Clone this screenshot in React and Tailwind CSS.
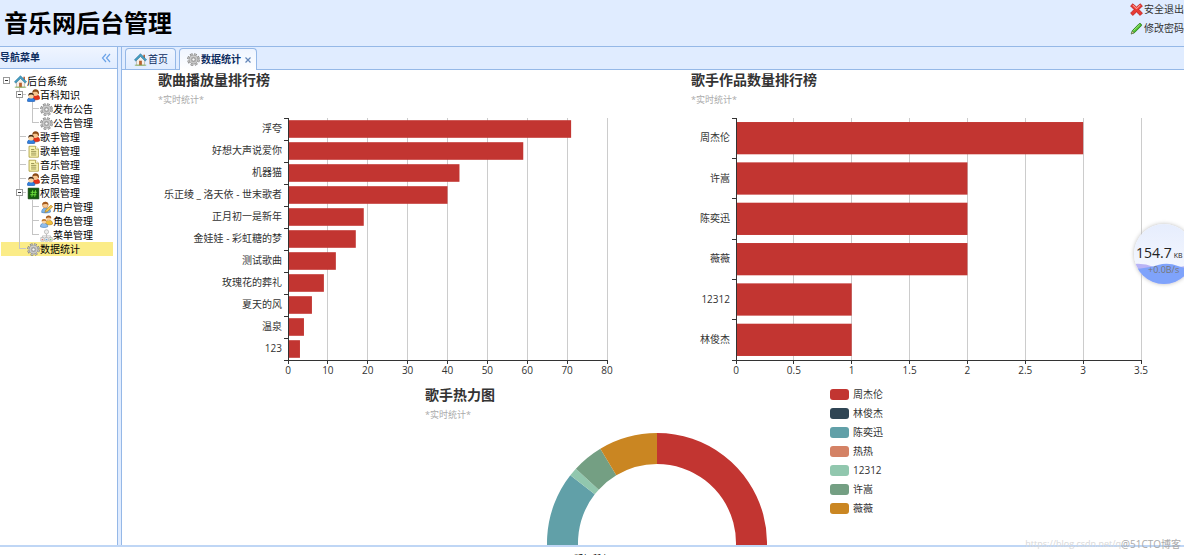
import React from "react";

const HomeIcon = () => (
  <svg viewBox="0 0 16 16" className="h-[13px] w-[13px] shrink-0" aria-hidden="true">
    <path d="M3 8v7h10V8L8 3z" fill="#f4f0ea" stroke="#a9a49c" strokeWidth=".8" />
    <path d="M11.5 2h2v4h-2z" fill="#b3623a" />
    <path d="M.6 8.4 8 1l7.4 7.4-1.6 1.4L8 4.2 2.2 9.8z" fill="#4aa3c7" stroke="#226f94" strokeWidth=".8" />
    <path d="M6.3 9.5h3.4V15H6.3z" fill="#b8612f" />
    <path d="M1 15h14" stroke="#7bab4c" strokeWidth="1" />
  </svg>
);

const GearIcon = () => (
  <svg viewBox="0 0 16 16" className="h-[13px] w-[13px] shrink-0" aria-hidden="true">
    <circle cx="8" cy="8" r="6.3" fill="none" stroke="#777" strokeWidth="3" strokeDasharray="3.1 1.85" />
    <circle cx="8" cy="8" r="6.2" fill="none" stroke="#c4c4c4" strokeWidth="1.700" strokeDasharray="2.3 2.57" strokeDashoffset="-.4" />
    <circle cx="8" cy="8" r="5.4" fill="#cfcfcf" stroke="#8c8c8c" strokeWidth=".7" />
    <circle cx="8" cy="8" r="3.5" fill="#b0b0b0" />
    <circle cx="8" cy="8" r="1.9" fill="#f7f7f7" stroke="#777" strokeWidth=".6" />
  </svg>
);

const UsersIcon = () => (
  <svg viewBox="0 0 16 16" className="h-[13px] w-[13px] shrink-0" aria-hidden="true">
    <path d="M6 11.500c0-3 2-4.500 5-4.500s4.700 1.500 4.700 5c-2 1.800-7 1.800-9.700 0z" fill="#e33219" stroke="#a51c0c" strokeWidth=".6" />
    <circle cx="10.300" cy="5" r="3.600" fill="#f7c48d" />
    <path d="M6.500 5C6.300 2 8 .4 10.500.4s4.500 1.500 4.300 4.800l-1 2c0-2.400-.8-3.400-2.400-3.800C9.500 3 8 3.400 6.500 5z" fill="#8a4a17" />
    <path d="M.3 15c0-3.200 1.800-4.400 4.700-4.400s4.800 1.400 4.800 4.400c-2.500.9-7 .9-9.500 0z" fill="#2f7fe0" stroke="#164d9c" strokeWidth=".6" />
    <circle cx="5" cy="8.500" r="3.200" fill="#fad3a0" />
    <path d="M1.600 8.500C1.500 6 2.800 4.700 5 4.700s3.700 1.300 3.500 3.800C7.500 7 5.900 6.900 4.900 6.900 3.600 6.900 2.500 7.500 1.600 8.500z" fill="#3d2614" />
  </svg>
);

const NoteIcon = () => (
  <svg viewBox="0 0 16 16" className="h-[13px] w-[13px] shrink-0" aria-hidden="true">
    <path d="M2.500 1.500h8l3.500 3.500v10H2.500z" fill="#fbf6b4" stroke="#a79a3c" />
    <path d="M10.500 1.500V5H14" fill="#fff" stroke="#a79a3c" strokeWidth=".9" />
    <path d="M5 5.500h4M5 7.800h6.500M5 10h6.500M5 12.300h6.500" stroke="#8f8847" strokeWidth="1.100" />
  </svg>
);

const GreenIcon = () => (
  <svg viewBox="0 0 16 16" className="h-[13px] w-[13px] shrink-0" aria-hidden="true">
    <path d="M1.500 1.500h13v13h-13z" fill="#145c0d" stroke="#0d3d08" />
    <path d="M7 4 6 12M10.500 4l-1 8M4.500 6.500h7.500M4 9.500h7.500" stroke="#6ddd3c" strokeWidth="1.200" />
  </svg>
);

const UserEditIcon = () => (
  <svg viewBox="0 0 16 16" className="h-[13px] w-[13px] shrink-0" aria-hidden="true">
    <path d="M2 14c0-4 2-5.500 5.500-5.500S13 10 13 13.500c-3 1.500-8 1.500-11 .5z" fill="#7fb4e8" stroke="#3c77b4" strokeWidth=".7" />
    <circle cx="6.500" cy="5" r="3.500" fill="#f7c893" stroke="#bd7537" strokeWidth=".6" />
    <path d="M2.800 5C2.500 2 4.500.8 6.700.8c2.500 0 4 1.700 3.600 4.200C9 3.300 5.500 3 2.800 5z" fill="#a45b20" />
    <path d="m6 14 1.200-3.200L13.500 5l2 2.200-6.300 5.800z" fill="#f2c34c" stroke="#a87414" strokeWidth=".7" />
  </svg>
);

const RoleIcon = () => (
  <svg viewBox="0 0 16 16" className="h-[13px] w-[13px] shrink-0" aria-hidden="true">
    <path d="M6.500 11c0-3 1.500-4.500 4.500-4.500s4.500 1.500 4.500 4.500c-2 1.500-6 1.500-9 0z" fill="#f0bd3b" stroke="#ac7b12" strokeWidth=".7" />
    <circle cx="10.500" cy="4" r="3" fill="#f7c893" />
    <path d="M7.200 4.200C7 1.800 8.500.6 10.600.6s3.500 1.500 3.300 3.700C12 2.700 9.500 2.700 7.200 4.200z" fill="#a45b20" />
    <path d="M.5 14.500c0-3 1.500-4.300 4.500-4.300s4.500 1.500 4.500 4.300c-2.500 1.200-6.500 1.200-9 0z" fill="#8fbdec" stroke="#3c77b4" strokeWidth=".7" />
    <circle cx="5" cy="8" r="2.700" fill="#f9d2a3" />
    <path d="M2 8C2 5.900 3.200 5 5 5s3.100 1 3 3C6.500 6.800 4 6.700 2 8z" fill="#c17a2f" />
  </svg>
);

const MenuTreeIcon = () => (
  <svg viewBox="0 0 16 16" className="h-[13px] w-[13px] shrink-0" aria-hidden="true">
    <path d="M8 6v5M3 11V8.500h10V11" fill="none" stroke="#b5b5b5" />
    <circle cx="8" cy="3.500" r="2.600" fill="#eee" stroke="#aaa" strokeWidth=".8" />
    <path d="M1 10.500h4v4.500H1zM6 10.500h4v4.500H6zM11 10.500h4v4.500h-4z" fill="#f4f4f4" stroke="#aaa" strokeWidth=".8" />
    <circle cx="3" cy="13" r="1" fill="#e07a6c" />
    <circle cx="8" cy="13" r="1" fill="#68a8e0" />
    <circle cx="13" cy="13" r="1" fill="#7cc46c" />
  </svg>
);

const CancelIcon = () => (
  <svg viewBox="0 0 16 16" className="h-[13px] w-[13px] shrink-0" aria-hidden="true">
    <path d="M3.500 1 8 5l4.500-4L15.300 3.600 11 8l4.300 4.500-2.800 2.800L8 11l-4.500 4.300L.7 12.500 5 8 .7 3.600z" fill="#e83a34" stroke="#b51713" strokeWidth=".9" strokeLinejoin="round" />
    <path d="M3.500 2.600 8 6.800l4.500-4.200" fill="none" stroke="#ff9c94" strokeWidth="1.300" />
  </svg>
);

const PencilIcon = () => (
  <svg viewBox="0 0 16 16" className="h-[13px] w-[13px] shrink-0" aria-hidden="true">
    <path d="M1.500 14.700 3 10.500 11.300 2c1.200-1 3.700 1 2.700 2.600L5.500 13.200z" fill="#4fc02f" stroke="#237512" strokeWidth="1" />
    <path d="M4.200 10.700 12 3.200" stroke="#a5ea85" strokeWidth="1.200" />
    <path d="m1.500 14.700 1.300-3.400 2.100 1.900z" fill="#f0d5a0" stroke="#555" strokeWidth=".5" />
  </svg>
);

function Guide({ kind }) {
  return (
    <svg viewBox="0 0 13 14" className="h-[14px] w-[13px] shrink-0" aria-hidden="true">
      {(kind === "line" || kind === "join" || kind === "fold") && (
        <path d="M5.500 0v14" stroke="#c4c4c4" />
      )}
      {kind === "end" && <path d="M5.500 0v7" stroke="#c4c4c4" />}
      {(kind === "join" || kind === "end" || kind === "fold") && (
        <path d="M6 6.500h6" stroke="#c4c4c4" />
      )}
      {(kind === "fold" || kind === "root") && (
        <>
          <rect x="2.500" y="3.500" width="6" height="6" fill="#fff" stroke="#999" />
          <path d="M4 6.500h3" stroke="#333" />
        </>
      )}
    </svg>
  );
}

const tree = [
  { text: "后台系统", icon: HomeIcon, guides: ["root"] },
  { text: "百科知识", icon: UsersIcon, guides: ["none", "fold"] },
  { text: "发布公告", icon: GearIcon, guides: ["none", "line", "join"] },
  { text: "公告管理", icon: GearIcon, guides: ["none", "line", "end"] },
  { text: "歌手管理", icon: UsersIcon, guides: ["none", "join"] },
  { text: "歌单管理", icon: NoteIcon, guides: ["none", "join"] },
  { text: "音乐管理", icon: NoteIcon, guides: ["none", "join"] },
  { text: "会员管理", icon: UsersIcon, guides: ["none", "join"] },
  { text: "权限管理", icon: GreenIcon, guides: ["none", "fold"] },
  { text: "用户管理", icon: UserEditIcon, guides: ["none", "line", "join"] },
  { text: "角色管理", icon: RoleIcon, guides: ["none", "line", "join"] },
  { text: "菜单管理", icon: MenuTreeIcon, guides: ["none", "line", "end"] },
  { text: "数据统计", icon: GearIcon, guides: ["none", "end"], active: true },
];

const plays = [
  ["浮夸", 71],
  ["好想大声说爱你", 59],
  ["机器猫", 43],
  ["乐正绫 _ 洛天依 - 世末歌者", 40],
  ["正月初一是新年", 19],
  ["金娃娃 - 彩虹糖的梦", 17],
  ["测试歌曲", 12],
  ["玫瑰花的葬礼", 9],
  ["夏天的风", 6],
  ["温泉", 4],
  ["123", 3],
];

const works = [
  ["周杰伦", 3],
  ["许嵩", 2],
  ["陈奕迅", 2],
  ["薇薇", 2],
  ["12312", 1],
  ["林俊杰", 1],
];

const legend = [
  ["周杰伦", "#c23531"],
  ["林俊杰", "#2f4554"],
  ["陈奕迅", "#61a0a8"],
  ["热热", "#d48265"],
  ["12312", "#91c7ae"],
  ["许嵩", "#749f83"],
  ["薇薇", "#ca8622"],
];

const slices = [
  [0, 150, "#c23531"],
  [150, 170, "#2f4554"],
  [170, 308, "#61a0a8"],
  [308, 312.5, "#91c7ae"],
  [312.5, 329, "#749f83"],
  [329, 360, "#ca8622"],
];

function ChartTitle({ children }) {
  return (
    <div>
      <h2 className="text-[14px] leading-5 font-bold text-[#333]">{children}</h2>
      <p className="text-[9px] leading-5 text-[#aaa]">*实时统计*</p>
    </div>
  );
}

function BarChart({ title, data, left, right, max, step }) {
  const top = 8;
  const bottom = 250;
  const band = (bottom - top) / data.length;
  const ticks = Array.from({ length: Math.round(max / step) + 1 }, (_, i) => i * step);
  const x = (v) => left + (v / max) * (right - left);
  const snap = (v) => Math.floor(v) + 0.5;
  return (
    <section>
      <div className="pl-9">
        <ChartTitle>{title}</ChartTitle>
      </div>
      <svg viewBox="0 0 529 275" className="block w-full" role="img" aria-label={title}>
        {ticks.slice(1).map((t) => (
          <path key={t} d={`M${snap(x(t))} ${top}V${bottom}`} stroke="#ccc" />
        ))}
        {data.map(([name, value], i) => (
          <g key={name}>
            <rect x={left} y={top + band * (i + 0.1)} width={x(value) - left} height={band * 0.8} fill="#c23531" />
            <text x={left - 6} y={top + band * (i + 0.5) + 3} textAnchor="end" fontSize="10" fill="#333">
              {name}
            </text>
          </g>
        ))}
        <path d={`M${snap(left)} ${top}V${bottom + 0.5}M${left} ${bottom + 0.5}H${right + 1}`} stroke="#333" />
        {[...data, null].map((_, i) => (
          <path key={i} d={`M${left - 4} ${snap(top + band * i)}h4`} stroke="#333" />
        ))}
        {ticks.map((t) => (
          <g key={t}>
            <path d={`M${snap(x(t))} ${bottom}v4`} stroke="#333" />
            <text x={x(t)} y={bottom + 14} textAnchor="middle" fontSize="10" fill="#333">
              {t}
            </text>
          </g>
        ))}
      </svg>
    </section>
  );
}

function ring(from, to) {
  const point = (angle, r) => {
    const a = (angle * Math.PI) / 180;
    return `${110 + r * Math.sin(a)} ${110 - r * Math.cos(a)}`;
  };
  const large = to - from > 180 ? 1 : 0;
  return `M${point(from, 110)}A110 110 0 ${large} 1 ${point(to, 110)}L${point(to, 79)}A79 79 0 ${large} 0 ${point(from, 79)}Z`;
}

export default function App() {
  return (
    <div className="relative flex h-screen flex-col overflow-hidden bg-[#e0ecff] font-['Open_Sans','Noto_Sans_CJK_SC',sans-serif] text-[10px] text-black">
      <header className="flex h-[47px] shrink-0 items-center justify-between border-b border-[#95b8e7] pl-1">
        <h1 className="text-2xl font-bold">音乐网后台管理</h1>
        <nav className="flex flex-col self-start text-[#333]">
          <a href="#logout" className="flex h-[19px] items-center gap-px whitespace-nowrap">
            <CancelIcon />
            安全退出
          </a>
          <a href="#password" className="flex h-[19px] items-center gap-px whitespace-nowrap">
            <PencilIcon />
            修改密码
          </a>
        </nav>
      </header>

      <div className="flex min-h-0 flex-1 gap-[3px]">
        <aside className="flex w-[118px] shrink-0 flex-col border-r border-[#95b8e7] bg-white">
          <div className="flex h-[22px] shrink-0 items-center justify-between border-b border-[#95b8e7] bg-linear-to-b from-[#eff5ff] to-[#e0ecff] pr-[6px]">
            <h2 className="font-bold text-[#0e2d5f]">导航菜单</h2>
            <button type="button" aria-label="收起" className="flex">
              <svg viewBox="0 0 10 10" className="h-[10px] w-[10px]" aria-hidden="true">
                <path d="M5 1 1.500 5 5 9M9 1 5.500 5 9 9" fill="none" stroke="#6ba3e8" strokeWidth="1.200" />
              </svg>
            </button>
          </div>
          <ul className="pt-[5px] pr-1 pl-px">
            {tree.map(({ text, icon: Icon, guides, active }) => (
              <li key={text} className={active ? "bg-[#fbec88]" : ""}>
                <a href="#node" className="flex h-[14px] items-center whitespace-nowrap">
                  {guides.map((kind, i) => (
                    <Guide key={i} kind={kind} />
                  ))}
                  <Icon />
                  {text}
                </a>
              </li>
            ))}
          </ul>
        </aside>

        <main className="flex min-w-0 flex-1 flex-col border-l border-[#95b8e7] bg-white">
          <div role="tablist" className="flex h-[23px] shrink-0 items-end gap-[3px] border-b border-[#95b8e7] bg-[#e0ecff] pl-[3px] text-[#0e2d5f]">
            <button type="button" role="tab" aria-selected="false" className="flex h-[21px] items-center gap-px rounded-t border border-b-0 border-[#95b8e7] bg-linear-to-b from-[#eff5ff] to-[#e0ecff] pr-[7px] pl-2 whitespace-nowrap">
              <HomeIcon />
              首页
            </button>
            <div className="-mb-px flex h-[22px] items-center gap-1 rounded-t border border-b-0 border-[#95b8e7] bg-linear-to-b from-[#eff5ff] to-white pr-[5px] pl-[7px]">
              <button type="button" role="tab" aria-selected="true" className="flex items-center gap-px font-bold whitespace-nowrap">
                <GearIcon />
                数据统计
              </button>
              <button type="button" aria-label="关闭" className="flex">
                <svg viewBox="0 0 6 6" className="h-[6px] w-[6px]" aria-hidden="true">
                  <path d="m.5.5 5 5m0-5-5 5" stroke="#6286b8" strokeWidth="1.200" />
                </svg>
              </button>
            </div>
          </div>

          <div className="min-h-0 flex-1 overflow-hidden">
            <div className="grid grid-cols-2 gap-1">
              <BarChart title="歌曲播放量排行榜" data={plays} left={166} right={485} max={80} step={10} />
              <BarChart title="歌手作品数量排行榜" data={works} left={81} right={486} max={3.5} step={0.5} />
            </div>
            <section className="flex justify-center pl-[2px]">
              <div className="w-[405px] shrink-0">
                <ChartTitle>歌手热力图</ChartTitle>
                <svg viewBox="0 0 220 220" className="mt-2 ml-[122px] h-[220px] w-[220px]" role="img" aria-label="歌手热力图">
                  {slices.map(([from, to, color]) => (
                    <path key={color} d={ring(from, to)} fill={color} />
                  ))}
                </svg>
              </div>
              <ul className="text-[#333]">
                {legend.map(([name, color]) => (
                  <li key={name} className="flex h-[19px] items-center gap-1 whitespace-nowrap">
                    <svg viewBox="0 0 19 11" className="h-[11px] w-[19px]" aria-hidden="true">
                      <rect width="19" height="11" rx="3" fill={color} />
                    </svg>
                    {name}
                  </li>
                ))}
              </ul>
            </section>
          </div>
        </main>
      </div>

      <footer className="h-[10px] shrink-0 overflow-hidden border-t-2 border-[#bfd6f5] bg-white pt-1 text-center text-[9px] leading-4">
        <p>版权所有</p>
      </footer>

      <aside aria-label="网速" className="absolute top-[224px] -right-[10px] h-[60px] w-[60px] overflow-hidden rounded-full bg-linear-to-b from-[#e6edfd] to-[#f8faff] shadow-[0_0_4px_#bbb]">
        <svg viewBox="0 0 60 60" className="absolute inset-0" aria-hidden="true">
          <path d="M0 40q10-1 20 3t40-3v20H0z" fill="#b9b4f6" />
          <path d="M0 45q14-1 24-4t20 1 16 0v18H0z" fill="#7fa3fb" />
        </svg>
        <div className="relative flex flex-col pt-5 pl-[2px] whitespace-nowrap">
          <p className="flex items-baseline gap-[2px] text-[14px] leading-[18px] text-[#222]">
            154.7 <span className="text-[7px]">KB</span>
          </p>
          <p className="pl-3 text-[9px] leading-[10px] text-[#777]">+0.0B/s</p>
        </div>
      </aside>

      <div className="pointer-events-none absolute right-[3px] bottom-1 flex text-[10px] leading-[14px] whitespace-nowrap">
        <span className="text-[9px] text-[#d8d8d8]">https://blog.csdn.net/q</span>
        <span className="text-[#aaa]">@51CTO博客</span>
      </div>
    </div>
  );
}
